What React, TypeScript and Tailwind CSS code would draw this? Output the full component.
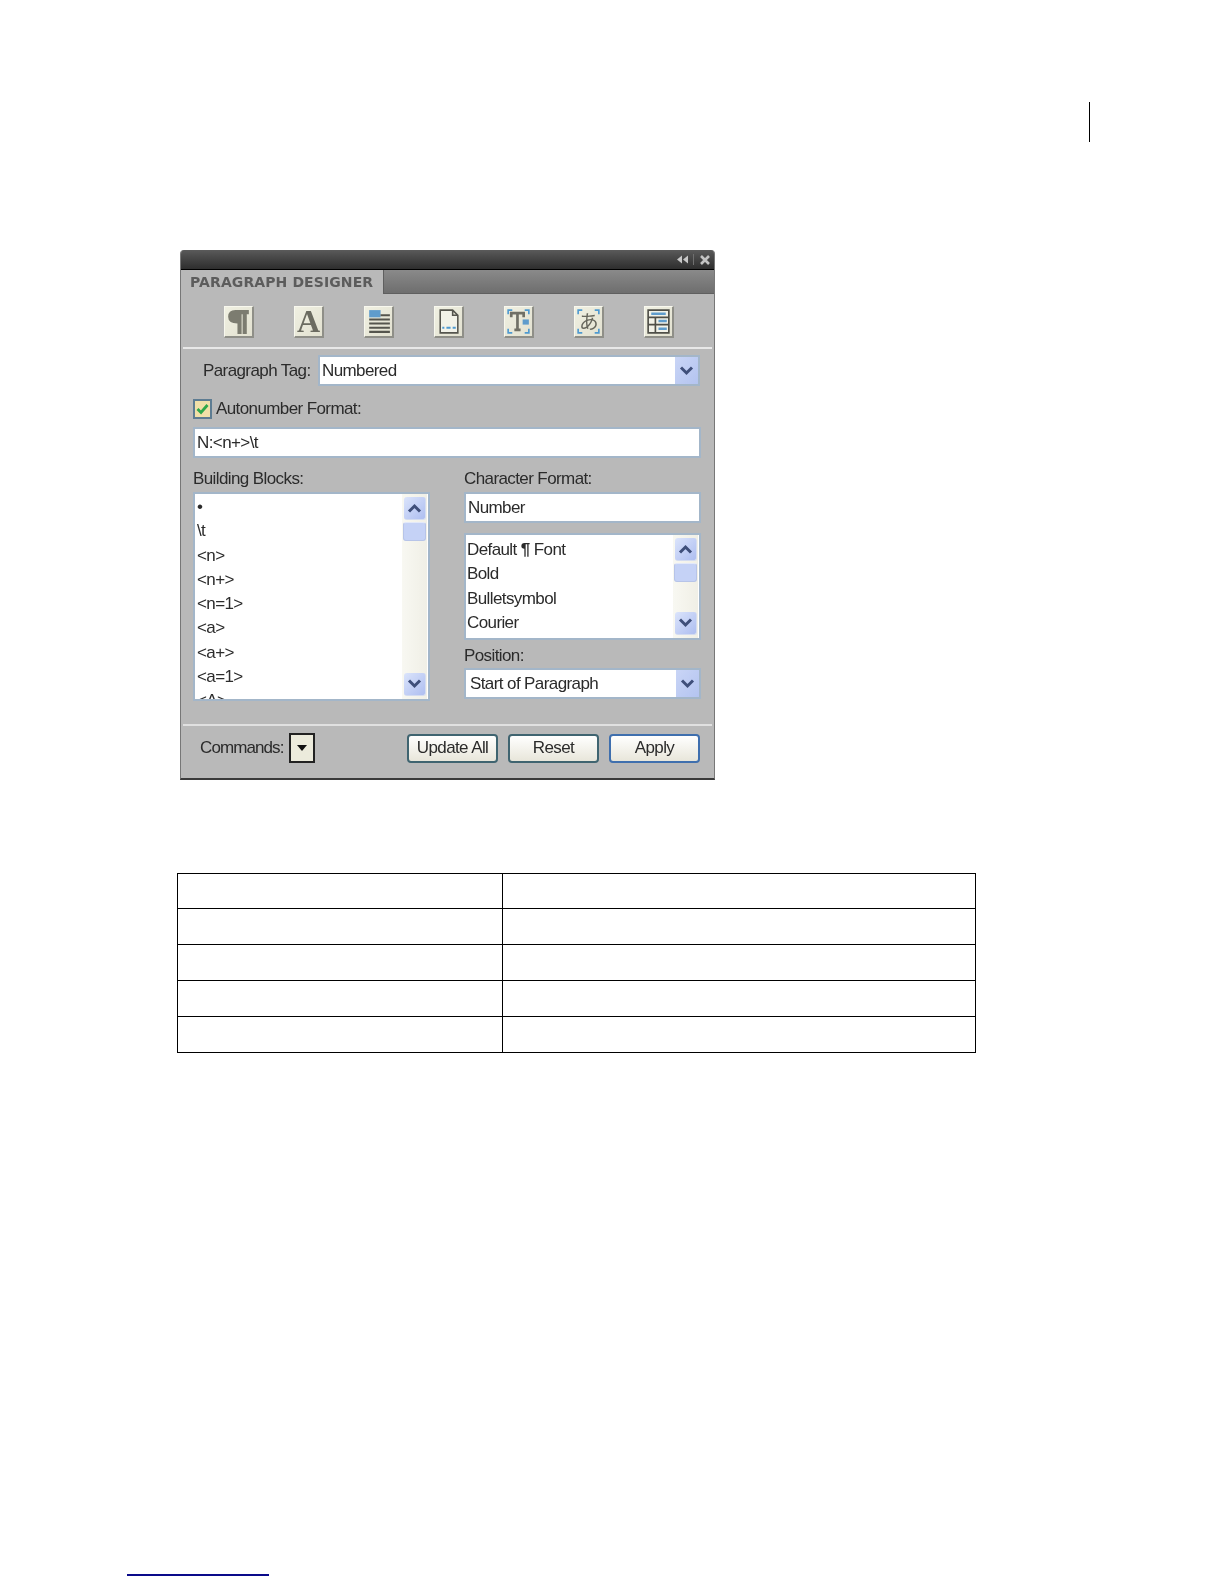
import React from "react";

const Btn = ({ children }: { children: React.ReactNode }) => (
  <div className="w-[30px] h-[32px] bg-gradient-to-br from-[#f0f0e2] to-[#e2e1d0] border-t border-l border-t-[#f8f8ee] border-l-[#f8f8ee] border-r-2 border-b-2 border-r-[#8f8f88] border-b-[#8f8f88] flex items-center justify-center">
    <svg width="27" height="29" viewBox="0 0 26 28">{children}</svg>
  </div>
);

const Chevron = ({ up, className }: { up?: boolean; className?: string }) => (
  <svg width="15" height="10" viewBox="0 0 15 10" className={className}>
    <path d={up ? "M2 8.5 L7.5 3 L13 8.5" : "M2 1.5 L7.5 7 L13 1.5"} fill="none" stroke="#3f4f7a" strokeWidth="3" />
  </svg>
);

const ScrollBtn = ({ up }: { up?: boolean }) => (
  <div className="h-[23px] w-[22px] rounded-[3px] bg-gradient-to-br from-[#dbe4fb] to-[#aebef0] border-b border-r border-[#d4dcf0] flex items-center justify-center">
    <Chevron up={up} />
  </div>
);

const Scrollbar = () => (
  <div className="w-[25px] shrink-0 bg-gradient-to-r from-[#f8f8f2] to-[#f0efe6] flex flex-col items-center pt-[3px] pb-[3px]">
    <ScrollBtn up />
    <div className="h-[19px] w-[23px] mt-[2px] rounded-[3px] bg-[#c5d2f6] border border-[#b7c4e8] border-t-[#e3e9fa]" />
    <div className="flex-1" />
    <ScrollBtn />
  </div>
);

const Select = ({ text, className }: { text: string; className: string }) => (
  <div className={`bg-white border-2 border-[#a3b6c9] flex items-center justify-between ${className}`}>
    <span>{text}</span>
    <div className="w-[23px] h-[27px] bg-gradient-to-br from-[#c9d5f6] to-[#b4c4f0] flex items-center justify-center">
      <Chevron />
    </div>
  </div>
);

const Button = ({ text, def }: { text: string; def?: boolean }) => (
  <div
    className={`w-[91px] h-[29px] rounded-[4px] border-2 bg-gradient-to-b from-white to-[#e8e6da] flex items-center justify-center ${
      def ? "border-[#3f6fae]" : "border-[#3f6470]"
    }`}
  >
    {text}
  </div>
);

const rows = [0, 1, 2, 3, 4];

export default function App() {
  return (
    <div className="relative bg-white h-[1584px] w-[1224px] overflow-hidden font-['Liberation_Sans',sans-serif]">
      <div className="flex justify-end pr-[134px] pt-[102px]">
        <div className="w-[1px] h-[40px] bg-black" />
      </div>

      {/* Panel */}
      <div className="ml-[180px] mt-[108px] w-[535px] h-[530px] bg-[#b9b9b9] border-l border-r border-b-2 border-l-[#777] border-r-[#777] border-b-[#3a3a3a] rounded-t-[4px] text-[17px] leading-[24px] text-[#2b2b2b] tracking-[-0.6px] overflow-hidden blur-[0.35px]">
        <div className="h-[20px] bg-gradient-to-b from-[#5a5a5a] to-[#2e2e2e] border-b border-b-black flex items-center justify-end pr-[3px] gap-[4px]">
          <svg width="13" height="9" viewBox="0 0 13 9">
            <path d="M6 0.5 L1 4.5 L6 8.5 Z M12 0.5 L7 4.5 L12 8.5 Z" fill="#c8c8c8" />
          </svg>
          <div className="w-px h-[11px] bg-[#6f6f6f]" />
          <svg width="12" height="10" viewBox="0 0 12 10" className="ml-[1px]">
            <path d="M2 1 L10 9 M10 1 L2 9" stroke="#c4c4c4" strokeWidth="2.6" fill="none" />
          </svg>
        </div>
        <div className="h-[24px] bg-gradient-to-b from-[#8a8a8a] to-[#6e6e6e] flex border-b border-b-[#5f5f5f]">
          <div className="w-[203px] h-[24px] bg-[#b9b9b9] pl-[9px] border-r border-r-[#5f5f5f] font-['DejaVu_Sans',sans-serif] font-bold text-[14px] leading-[24px] tracking-[0.1px] text-[#5c5c5c] whitespace-nowrap">
            PARAGRAPH DESIGNER
          </div>
        </div>

        {/* Toolbar */}
        <div className="flex gap-[40px] pl-[43px] pt-[12px]">
          <Btn>
            <path d="M10 3 H23 V7 H21 V26 H17 V7 H16 V26 H12 V16 Q3 16 3 9.5 Q3 3 10 3 Z" fill="#7c7c70" />
          </Btn>
          <div className="w-[30px] h-[32px] bg-gradient-to-br from-[#f0f0e2] to-[#e2e1d0] border-t border-l border-t-[#f8f8ee] border-l-[#f8f8ee] border-r-2 border-b-2 border-r-[#8f8f88] border-b-[#8f8f88] flex items-center justify-center font-['Liberation_Serif',serif] font-bold text-[32px] leading-[29px] tracking-normal text-[#6b6b60]">
            A
          </div>
          <Btn>
            <rect x="4" y="3" width="11" height="7" fill="#5f9ccc" />
            <path d="M15 8 H24 M4 12 H24 M4 16 H24 M4 20 H24 M4 24 H24" stroke="#55554d" strokeWidth="2" />
          </Btn>
          <Btn>
            <path d="M5 3 H17 L22 8 V25 H5 Z M17 3 V8 H22" fill="#f2f2e8" stroke="#55554e" strokeWidth="1.5" />
            <path d="M7 20 H9 M11 20 H15 M17 20 H20" stroke="#4f9ad0" strokeWidth="2" />
          </Btn>
          <Btn>
            <path d="M3 7 V3 H7 M19 3 H23 V7 M3 21 V25 H7 M19 25 H23 V21" fill="none" stroke="#4f9ad0" strokeWidth="1.6" />
            <path d="M6 10 V6 H18 V10 M12 6 V22 M9 22 H15" fill="none" stroke="#707066" strokeWidth="2.6" />
            <rect x="17" y="12" width="6" height="5" fill="#5f9ccc" />
          </Btn>
          <Btn>
            <path d="M3 7 V3 H7 M19 3 H23 V7 M3 21 V25 H7 M19 25 H23 V21" fill="none" stroke="#4f9ad0" strokeWidth="1.6" />
            <text x="13" y="21" textAnchor="middle" fontSize="19" fontFamily="'Noto Sans CJK JP', sans-serif" fill="#66665c">あ</text>
          </Btn>
          <Btn>
            <path d="M3 3 H23 V25 H3 Z M3 10 H23 M3 17 H23 M10 10 V25" fill="#f2f2e8" stroke="#4f4f48" strokeWidth="1.6" />
            <path d="M6 6.5 H20 M13 13.5 H21 M13 21 H21" stroke="#5f9ccc" strokeWidth="2.4" />
          </Btn>
        </div>

        <div className="h-[2px] bg-[#e8e8e8] mx-[2px] mt-[9px]" />

        {/* Paragraph tag */}
        <div className="flex items-center mt-[6px] pl-[22px]">
          <span className="w-[115px] whitespace-nowrap">Paragraph Tag:</span>
          <Select text="Numbered" className="w-[382px] h-[31px] pl-[2px]" />
        </div>

        {/* Autonumber */}
        <div className="flex items-center mt-[11px] pl-[12px]">
          <div className="w-[19px] h-[20px] border-2 border-[#5d7c92] bg-[#f1e0a8] flex items-center justify-center">
            <svg width="13" height="12" viewBox="0 0 13 12">
              <path d="M1.5 6 L5 9.5 L11.5 2" fill="none" stroke="#2fa84a" strokeWidth="2.8" />
            </svg>
          </div>
          <span className="ml-[4px]">Autonumber Format:</span>
        </div>
        <div className="mt-[6px] ml-[12px] w-[508px] h-[31px] bg-white border-2 border-[#a3b6c9] pl-[2px] flex items-center">
          N:&lt;n+&gt;\t
        </div>

        {/* Two columns */}
        <div className="flex mt-[9px] pl-[12px]">
          <div className="w-[237px] mr-[34px]">
            <div className="h-[24px]">Building Blocks:</div>
            <div className="mt-[1px] h-[209px] bg-white border-2 border-[#a3b6c9] flex overflow-hidden pr-[1px]">
              <div className="flex-1 pl-[2px] pt-[1px] overflow-hidden">
                {["•", "\\t", "<n>", "<n+>", "<n=1>", "<a>", "<a+>", "<a=1>", "<A>"].map((t) => (
                  <div key={t} className="h-[24.25px]">{t}</div>
                ))}
              </div>
              <Scrollbar />
            </div>
          </div>
          <div className="w-[237px]">
            <div className="h-[24px]">Character Format:</div>
            <div className="mt-[1px] h-[31px] bg-white border-2 border-[#a3b6c9] pl-[2px] flex items-center">Number</div>
            <div className="mt-[10px] h-[107px] bg-white border-2 border-[#a3b6c9] flex overflow-hidden pr-[1px]">
              <div className="flex-1 pl-[1px] pt-[3px]">
                <div className="h-[24.25px]">Default <span className="font-bold">¶</span> Font</div>
                {["Bold", "Bulletsymbol", "Courier"].map((t) => (
                  <div key={t} className="h-[24.25px]">{t}</div>
                ))}
              </div>
              <Scrollbar />
            </div>
            <div className="mt-[4px] h-[24px]">Position:</div>
            <Select text="Start of Paragraph" className="h-[31px] pl-[4px]" />
          </div>
        </div>

        <div className="h-[2px] bg-[#e0e0e0] mx-[2px] mt-[23px]" />

        {/* Commands */}
        <div className="flex items-center mt-[7px] pl-[19px] pr-[14px]">
          <span className="w-[89px] tracking-[-0.9px]">Commands:</span>
          <div className="w-[26px] h-[30px] border-2 border-[#222] bg-[#ecebdc] flex items-center justify-center">
            <svg width="12" height="8" viewBox="0 0 12 8">
              <path d="M1 1 H11 L6 7 Z" fill="#111" />
            </svg>
          </div>
          <div className="flex-1" />
          <div className="flex gap-[10px]">
            <Button text="Update All" />
            <Button text="Reset" />
            <Button text="Apply" def />
          </div>
        </div>
      </div>

      {/* Table */}
      <div className="ml-[177px] mt-[93px] w-[799px] border-t border-l border-black">
        {rows.map((r) => (
          <div key={r} className={`flex ${r === 0 ? "h-[35px]" : "h-[36px]"} border-b border-black`}>
            <div className="w-[325px] border-r border-black" />
            <div className="flex-1 border-r border-black" />
          </div>
        ))}
      </div>

      {/* Footer link rule */}
      <div className="absolute left-[127px] top-[1574px] w-[142px] h-[2px] bg-[#0a0a8a]" />
    </div>
  );
}
